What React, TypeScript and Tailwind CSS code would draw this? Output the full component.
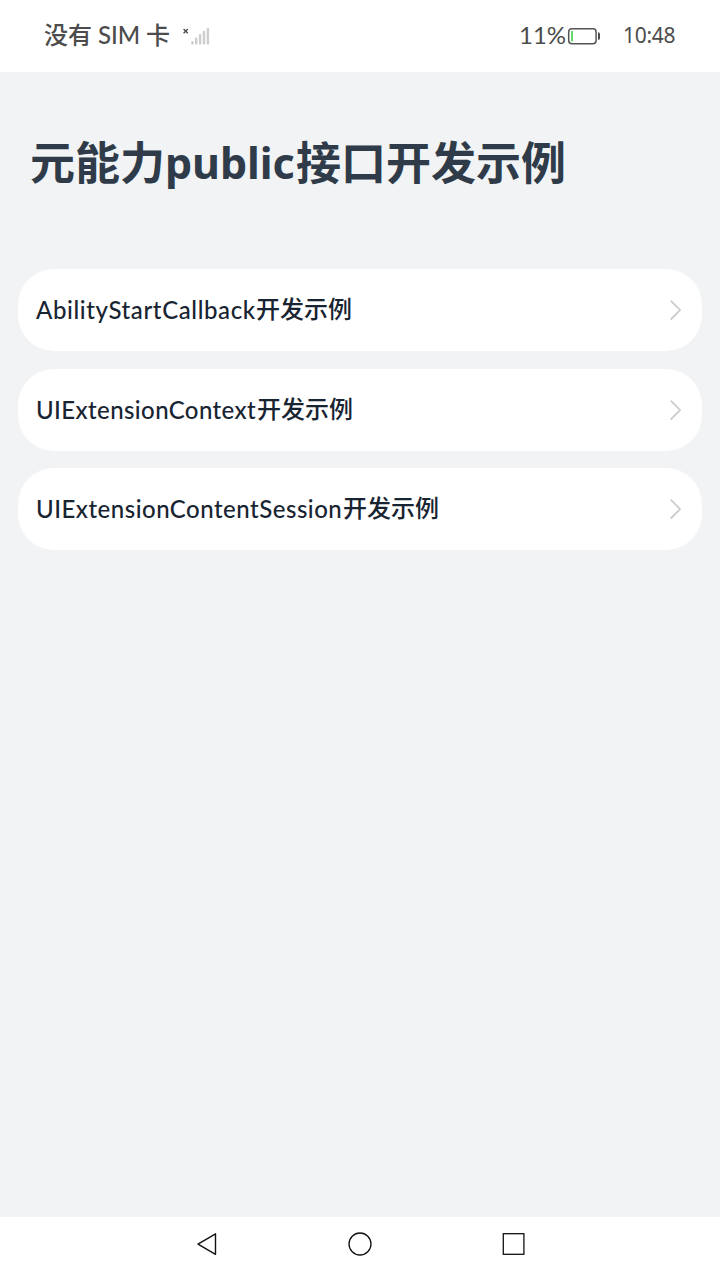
const items = [
  { latin: 'AbilityStartCallback', width: 'w-[220px] tracking-[0.6px]' },
  { latin: 'UIExtensionContext', width: 'w-[221px] tracking-[0.4px]' },
  { latin: 'UIExtensionContentSession', width: 'w-[307px] tracking-[0.5px]' },
];

function StatusBar() {
  return (
    <header className="flex h-[72px] shrink-0 items-center bg-white pr-[45px] pl-[44px] text-[#4c4c4c]">
      <div className="flex items-center whitespace-nowrap text-[24px] leading-[30px] font-medium">
        <span className="w-[54px] pb-[4px]">没有</span>
        <span className="w-[48px] pb-[2px] font-['Lato',sans-serif]">SIM</span>
        <span className="w-[24px] pb-[4px]">卡</span>
      </div>
      <svg className="ml-[12px]" width="30" height="24" viewBox="182 24 30 24" fill="none">
        <path d="M183.6 29l4.2 4.2M187.8 29l-4.2 4.2" stroke="#4c4c4c" strokeWidth="1.4" />
        <path
          d="M192.4 42.2v1.2M196.2 38.7v4.7M200.1 35.3v8.1M204 32v11.4M207.9 29v14.4"
          stroke="#cdcdcd"
          strokeWidth="2.4"
          strokeLinecap="round"
        />
      </svg>
      <div className="ml-auto flex items-center font-['Noto_Sans',sans-serif]">
        <span className="w-[48px] pb-[3px] text-[24px] leading-[30px] whitespace-nowrap font-['Lato',sans-serif]">11%</span>
        <svg width="34" height="20" viewBox="567 26 34 20" fill="none">
          <rect x="568.7" y="28.7" width="27.4" height="15" rx="3.2" stroke="#555" strokeWidth="1.5" />
          <rect x="571" y="31" width="2" height="10.4" fill="#64d86b" />
          <path d="M598 32.2q2 .2 2 2v3.8q0 1.8-2 2z" fill="#4c4c4c" />
        </svg>
        <span className="ml-[22px] w-[52px] pb-[3px] text-[21px] leading-[30px] tracking-[-0.3px] whitespace-nowrap">10:48</span>
      </div>
    </header>
  );
}

function NavigationBar() {
  return (
    <nav className="flex h-[63px] shrink-0 items-start justify-between bg-white px-[194px] pt-[15px]">
      <svg width="25" height="25" viewBox="0 0 25 25" fill="none" stroke="#111" strokeWidth="1.4">
        <path d="M21.5 1.8v20.5L4 12.1z" strokeLinejoin="round" />
      </svg>
      <svg width="25" height="25" viewBox="0 0 25 25" fill="none" stroke="#111" strokeWidth="1.3">
        <circle cx="12" cy="12" r="11" />
      </svg>
      <svg width="25" height="25" viewBox="0 0 25 25" fill="none" stroke="#111" strokeWidth="1.3">
        <rect x="2.3" y="1.7" width="20.6" height="20.6" />
      </svg>
    </nav>
  );
}

export default function App() {
  return (
    <div className="flex h-screen w-full flex-col bg-[#f1f3f5] font-['Noto_Sans_CJK_SC',sans-serif]">
      <StatusBar />
      <main className="flex flex-1 flex-col px-[18px] pt-[57px]">
        <h1 className="flex h-[70px] items-center pl-[12px] text-[45px] leading-[70px] font-bold whitespace-nowrap text-[#303b49]">
          <span className="w-[135px] pb-[7px]">元能力</span>
          <span className="w-[131px] pb-[3px] font-['Noto_Sans',sans-serif] text-[43px] font-bold tracking-[-0.1px]">public</span>
          <span className="pb-[7px]">接口开发示例</span>
        </h1>
        <ul className="mt-[70px] flex flex-col gap-[17.5px]">
          {items.map((item) => (
            <li
              key={item.latin}
              className="flex h-[82px] items-center rounded-[36px] bg-white px-[18px] text-[24px] leading-[36px] font-medium whitespace-nowrap text-[#182431]"
            >
              <span className={`${item.width} font-['Lato',sans-serif]`}>{item.latin}</span>
              <span className="pb-[4px]">开发示例</span>
              <svg className="ml-auto" width="16" height="24" viewBox="0 0 16 24" fill="none">
                <path d="M3.2 3.2l8.9 8.9-8.9 8.9" stroke="#cdcdcd" strokeWidth="1.8" strokeLinecap="round" strokeLinejoin="round" />
              </svg>
            </li>
          ))}
        </ul>
      </main>
      <NavigationBar />
    </div>
  );
}
